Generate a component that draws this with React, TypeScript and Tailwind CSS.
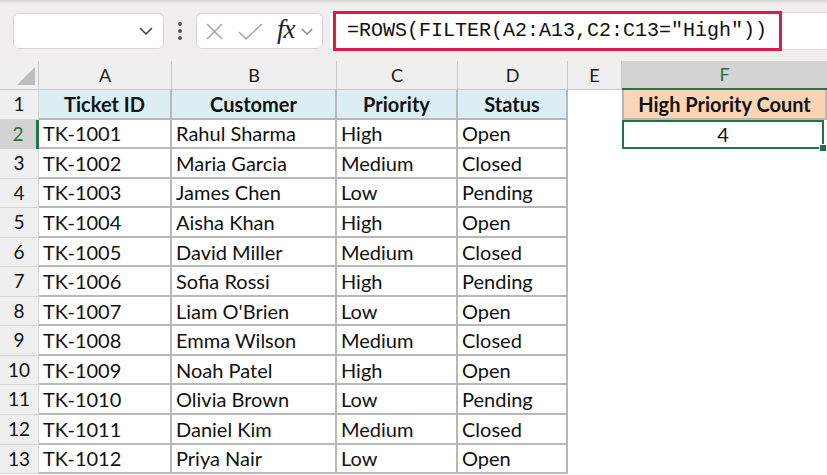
import React from "react";

const rows = [
  ["TK-1001", "Rahul Sharma", "High", "Open"],
  ["TK-1002", "Maria Garcia", "Medium", "Closed"],
  ["TK-1003", "James Chen", "Low", "Pending"],
  ["TK-1004", "Aisha Khan", "High", "Open"],
  ["TK-1005", "David Miller", "Medium", "Closed"],
  ["TK-1006", "Sofia Rossi", "High", "Pending"],
  ["TK-1007", "Liam O'Brien", "Low", "Open"],
  ["TK-1008", "Emma Wilson", "Medium", "Closed"],
  ["TK-1009", "Noah Patel", "High", "Open"],
  ["TK-1010", "Olivia Brown", "Low", "Pending"],
  ["TK-1011", "Daniel Kim", "Medium", "Closed"],
  ["TK-1012", "Priya Nair", "Low", "Open"],
];

const cols = ["A", "B", "C", "D", "E", "F"];

const Chevron = ({ className }: { className?: string }) => (
  <svg className={className} viewBox="0 0 14 8" fill="none">
    <path d="M1 1l6 6 6-6" stroke="currentColor" strokeWidth="1.6" />
  </svg>
);

const FormulaBar: React.FC = () => (
  <div className="h-[61px] bg-[#f1eeee] flex flex-col">
    <div className="h-[4px] bg-linear-to-b from-[#d6d3d3] to-[#f1eeee]"></div>
    <div className="flex items-start pt-[8px] pl-[13px]">
      <div className="w-[151px] h-[36px] rounded-[6px] border border-[#d8d5d5] bg-white flex items-center justify-end pr-[10px] mt-[1px]">
        <Chevron className="w-[14px] h-[8px] text-[#444]" />
      </div>
      <div className="w-[32px] h-[38px] flex flex-col items-center justify-center gap-[3px]">
        <span className="w-[4px] h-[4px] rounded-full bg-[#555]"></span>
        <span className="w-[4px] h-[4px] rounded-full bg-[#555]"></span>
        <span className="w-[4px] h-[4px] rounded-full bg-[#555]"></span>
      </div>
      <div className="w-[127px] h-[36px] rounded-[6px] border border-[#d8d5d5] bg-white flex items-center pl-[9px] mt-[1px]">
        <svg className="w-[17px] h-[17px] text-[#a0a0a0]" viewBox="0 0 17 17" fill="none">
          <path d="M1 1l15 15M16 1L1 16" stroke="currentColor" strokeWidth="1.4" />
        </svg>
        <svg className="w-[25px] h-[17px] ml-[15px] text-[#a0a0a0]" viewBox="0 0 25 17" fill="none">
          <path d="M1 9l7 7L24 1" stroke="currentColor" strokeWidth="1.4" />
        </svg>
        <span className="ml-[14px] text-[27px] italic text-[#222] leading-none [font-family:'Liberation_Serif',serif] tracking-[-1px] -mt-[3px]">
          fx
        </span>
        <Chevron className="w-[12px] h-[7px] ml-[6px] text-[#888]" />
      </div>
      <div className="flex-1 ml-[7px] h-[38px] bg-white border-y border-[#dedcdc] relative">
        <div className="absolute left-[3px] top-[-2px] w-[449px] h-[40px] border-[3px] border-[#de1a4b] flex items-center pl-[11px]">
          <span className="text-[20px] text-[#111] [font-family:'Liberation_Mono',monospace]">
            =ROWS(FILTER(A2:A13,C2:C13="High"))
          </span>
        </div>
      </div>
    </div>
  </div>
);

const App: React.FC = () => {
  const cell = "h-[29.55px] flex items-center";
  const tableBorder = "border-r-2 border-b-2 border-[#b8b8b8]";
  return (
    <div className="w-[827px] h-[475px] overflow-hidden bg-white [font-family:Lato,sans-serif] text-[#111]">
      <FormulaBar />
      <div className="grid grid-cols-[39px_133px_165px_121px_110px_54px_205px]">
        <div className="h-[29px] bg-[#efefef] border-r border-b border-[#c9c9c9] relative">
          <svg className="absolute left-[17px] top-[6px] w-[18px] h-[18px]" viewBox="0 0 18 18">
            <polygon points="0,18 18,18 18,0" fill="#bdbdbd" />
          </svg>
        </div>
        {cols.map((c) =>
          c === "F" ? (
            <div
              key={c}
              className="h-[29px] bg-[#d3d3d3] border-b-2 border-[#217346] flex items-center justify-center text-[18px] text-[#217346]"
            >
              {c}
            </div>
          ) : (
            <div
              key={c}
              className="h-[29px] bg-[#efefef] border-r border-b border-[#c9c9c9] flex items-center justify-center text-[18px] text-[#1a1a1a]"
            >
              {c}
            </div>
          )
        )}

        <div className={`${cell} justify-center bg-[#efefef] border-r border-b border-[#d6d6d6] text-[19px]`}>1</div>
        {["Ticket ID", "Customer", "Priority", "Status"].map((h) => (
          <div key={h} className={`${cell} justify-center bg-[#daeef3] font-bold text-[20px] ${tableBorder}`}>
            {h}
          </div>
        ))}
        <div className={`${cell}`}></div>
        <div className={`${cell} justify-center bg-[#fbd5b5] font-bold text-[20px] border-l-2 border-r-2 border-b-2 border-[#b8b8b8]`}>
          High Priority Count
        </div>

        {rows.map((r, i) => {
          const n = i + 2;
          const selected = n === 2;
          return (
            <React.Fragment key={n}>
              <div
                className={
                  selected
                    ? `${cell} justify-center bg-[#d3d3d3] border-r-[3px] border-[#217346] text-[19px] text-[#217346]`
                    : `${cell} justify-center bg-[#efefef] border-r border-b border-[#d6d6d6] text-[19px]`
                }
              >
                {n}
              </div>
              {r.map((v, j) => (
                <div key={j} className={`${cell} pl-[4px] text-[20px] ${tableBorder}`}>
                  {v}
                </div>
              ))}
              <div className={cell}></div>
              {selected ? (
                <div className={`${cell} justify-center text-[20px] border-2 border-[#217346] relative mr-[3px]`}>
                  4
                  <span className="absolute right-[-5px] bottom-[-5px] w-[8px] h-[8px] bg-[#217346] border border-white"></span>
                </div>
              ) : (
                <div className={cell}></div>
              )}
            </React.Fragment>
          );
        })}
      </div>
    </div>
  );
};

export default App;
